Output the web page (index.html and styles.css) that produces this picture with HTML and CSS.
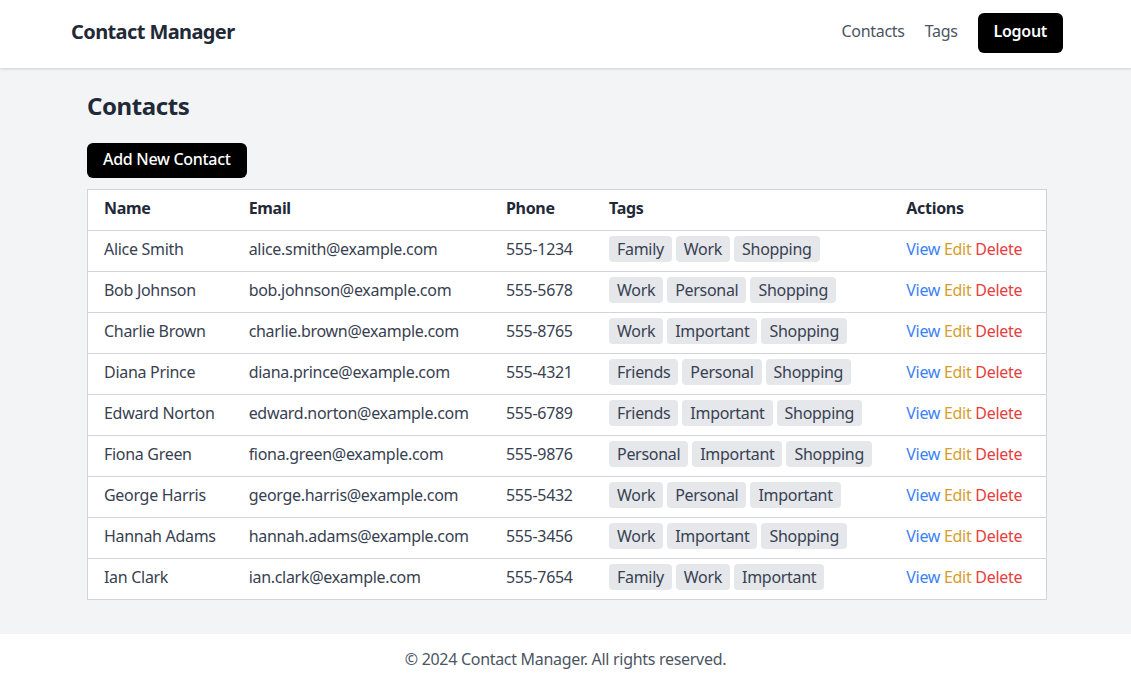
FILE: index.html
```html
<!DOCTYPE html>
<html lang="en">
<head>
<meta charset="utf-8">
<title>Contact Manager</title>
<link rel="stylesheet" href="styles.css">
</head>
<body>
<header class="site-header">
  <div class="header-inner">
    <div class="brand">Contact Manager</div>
    <nav class="nav">
      <a class="nav-link" href="#">Contacts</a>
      <a class="nav-link" href="#">Tags</a>
      <a class="btn btn-logout" href="#">Logout</a>
    </nav>
  </div>
</header>
<main class="main">
  <h1 class="page-title">Contacts</h1>
  <a class="btn btn-add" href="#">Add New Contact</a>
  <table class="contacts">
    <colgroup>
      <col class="c-name"><col class="c-email"><col class="c-phone"><col class="c-tags"><col class="c-actions">
    </colgroup>
    <thead>
      <tr><th>Name</th><th>Email</th><th>Phone</th><th>Tags</th><th>Actions</th></tr>
    </thead>
    <tbody>
      <tr><td>Alice Smith</td><td>alice.smith@example.com</td><td>555-1234</td><td><div class="tags"><span class="tag">Family</span><span class="tag">Work</span><span class="tag">Shopping</span></div></td><td><a class="act view" href="#">View</a> <a class="act edit" href="#">Edit</a> <a class="act del" href="#">Delete</a></td></tr>
      <tr><td>Bob Johnson</td><td>bob.johnson@example.com</td><td>555-5678</td><td><div class="tags"><span class="tag">Work</span><span class="tag">Personal</span><span class="tag">Shopping</span></div></td><td><a class="act view" href="#">View</a> <a class="act edit" href="#">Edit</a> <a class="act del" href="#">Delete</a></td></tr>
      <tr><td>Charlie Brown</td><td>charlie.brown@example.com</td><td>555-8765</td><td><div class="tags"><span class="tag">Work</span><span class="tag">Important</span><span class="tag">Shopping</span></div></td><td><a class="act view" href="#">View</a> <a class="act edit" href="#">Edit</a> <a class="act del" href="#">Delete</a></td></tr>
      <tr><td>Diana Prince</td><td>diana.prince@example.com</td><td>555-4321</td><td><div class="tags"><span class="tag">Friends</span><span class="tag">Personal</span><span class="tag">Shopping</span></div></td><td><a class="act view" href="#">View</a> <a class="act edit" href="#">Edit</a> <a class="act del" href="#">Delete</a></td></tr>
      <tr><td>Edward Norton</td><td>edward.norton@example.com</td><td>555-6789</td><td><div class="tags"><span class="tag">Friends</span><span class="tag">Important</span><span class="tag">Shopping</span></div></td><td><a class="act view" href="#">View</a> <a class="act edit" href="#">Edit</a> <a class="act del" href="#">Delete</a></td></tr>
      <tr><td>Fiona Green</td><td>fiona.green@example.com</td><td>555-9876</td><td><div class="tags"><span class="tag">Personal</span><span class="tag">Important</span><span class="tag">Shopping</span></div></td><td><a class="act view" href="#">View</a> <a class="act edit" href="#">Edit</a> <a class="act del" href="#">Delete</a></td></tr>
      <tr><td>George Harris</td><td>george.harris@example.com</td><td>555-5432</td><td><div class="tags"><span class="tag">Work</span><span class="tag">Personal</span><span class="tag">Important</span></div></td><td><a class="act view" href="#">View</a> <a class="act edit" href="#">Edit</a> <a class="act del" href="#">Delete</a></td></tr>
      <tr><td>Hannah Adams</td><td>hannah.adams@example.com</td><td>555-3456</td><td><div class="tags"><span class="tag">Work</span><span class="tag">Important</span><span class="tag">Shopping</span></div></td><td><a class="act view" href="#">View</a> <a class="act edit" href="#">Edit</a> <a class="act del" href="#">Delete</a></td></tr>
      <tr><td>Ian Clark</td><td>ian.clark@example.com</td><td>555-7654</td><td><div class="tags"><span class="tag">Family</span><span class="tag">Work</span><span class="tag">Important</span></div></td><td><a class="act view" href="#">View</a> <a class="act edit" href="#">Edit</a> <a class="act del" href="#">Delete</a></td></tr>
    </tbody>
  </table>
</main>
<footer class="site-footer">© 2024 Contact Manager. All rights reserved.</footer>
</body>
</html>
```
FILE: styles.css
```css
* { box-sizing: border-box; }
html, body { margin: 0; padding: 0; }
body {
  font-family: "Noto Sans", "DejaVu Sans", sans-serif;
  font-size: 16px;
  line-height: 24px;
  letter-spacing: -0.3px;
  color: #1f2937;
  background: #f3f4f6;
  padding-left: 3px;
}
a { text-decoration: none; }

.site-header {
  background: #ffffff;
  box-shadow: 0 1px 3px rgba(0,0,0,0.1), 0 1px 2px rgba(0,0,0,0.06);
  margin-left: -3px;
  padding-left: 3px;
}
.header-inner {
  max-width: 1024px;
  margin: 0 auto;
  height: 68px;
  padding: 0 16px 2px;
  display: flex;
  align-items: center;
  justify-content: space-between;
}
.brand {
  font-size: 20px;
  line-height: 28px;
  padding-bottom: 2px;
  font-weight: 700;
  letter-spacing: -0.6px;
  color: #1f2937;
}
.nav { display: flex; align-items: center; gap: 20px; }
.nav-link { color: #4b5563; padding-bottom: 4px; }

.btn {
  display: inline-block;
  background: #000000;
  color: #ffffff;
  font-weight: 500;
  border-radius: 6px;
  padding: 0 16px;
}
.btn-logout { height: 40px; line-height: 36px; padding-bottom: 4px; font-weight: 600; }

.main {
  max-width: 1024px;
  margin: 0 auto;
  padding: 22px 32px 34px;
}
.page-title {
  margin: 0 0 21px;
  font-size: 24px;
  line-height: 32px;
  font-weight: 700;
  letter-spacing: -0.4px;
  color: #1f2937;
}
.btn-add { height: 35px; line-height: 33px; padding-bottom: 2px; margin-bottom: 11px; }

.contacts {
  width: 960px;
  table-layout: fixed;
  border-collapse: collapse;
  background: #ffffff;
  border: 1px solid #d1d5db;
}
.c-name { width: 145px; }
.c-email { width: 257px; }
.c-phone { width: 103px; }
.c-tags { width: 297px; }
.c-actions { width: 156px; }

.contacts th, .contacts td {
  text-align: left;
  padding: 6px 16px 10px;
  height: 41px;
  border-bottom: 1px solid #d1d5db;
  white-space: nowrap;
  color: #374151;
}
.contacts th { font-weight: 700; color: #1f2937; }

.tags { display: flex; gap: 4px; height: 24px; align-items: center; }
.tag {
  background: #e5e7eb;
  border-radius: 4px;
  padding: 0 8px;
  height: 26px;
  line-height: 26px;
  color: #374151;
}
.act.view { color: #3b82f6; }
.act.edit { color: #d69e2e; }
.act.del { color: #e53e3e; }

.site-footer {
  background: #ffffff;
  margin-left: -3px;
  text-align: center;
  padding: 13px 0 18px;
  color: #4b5563;
}
```
